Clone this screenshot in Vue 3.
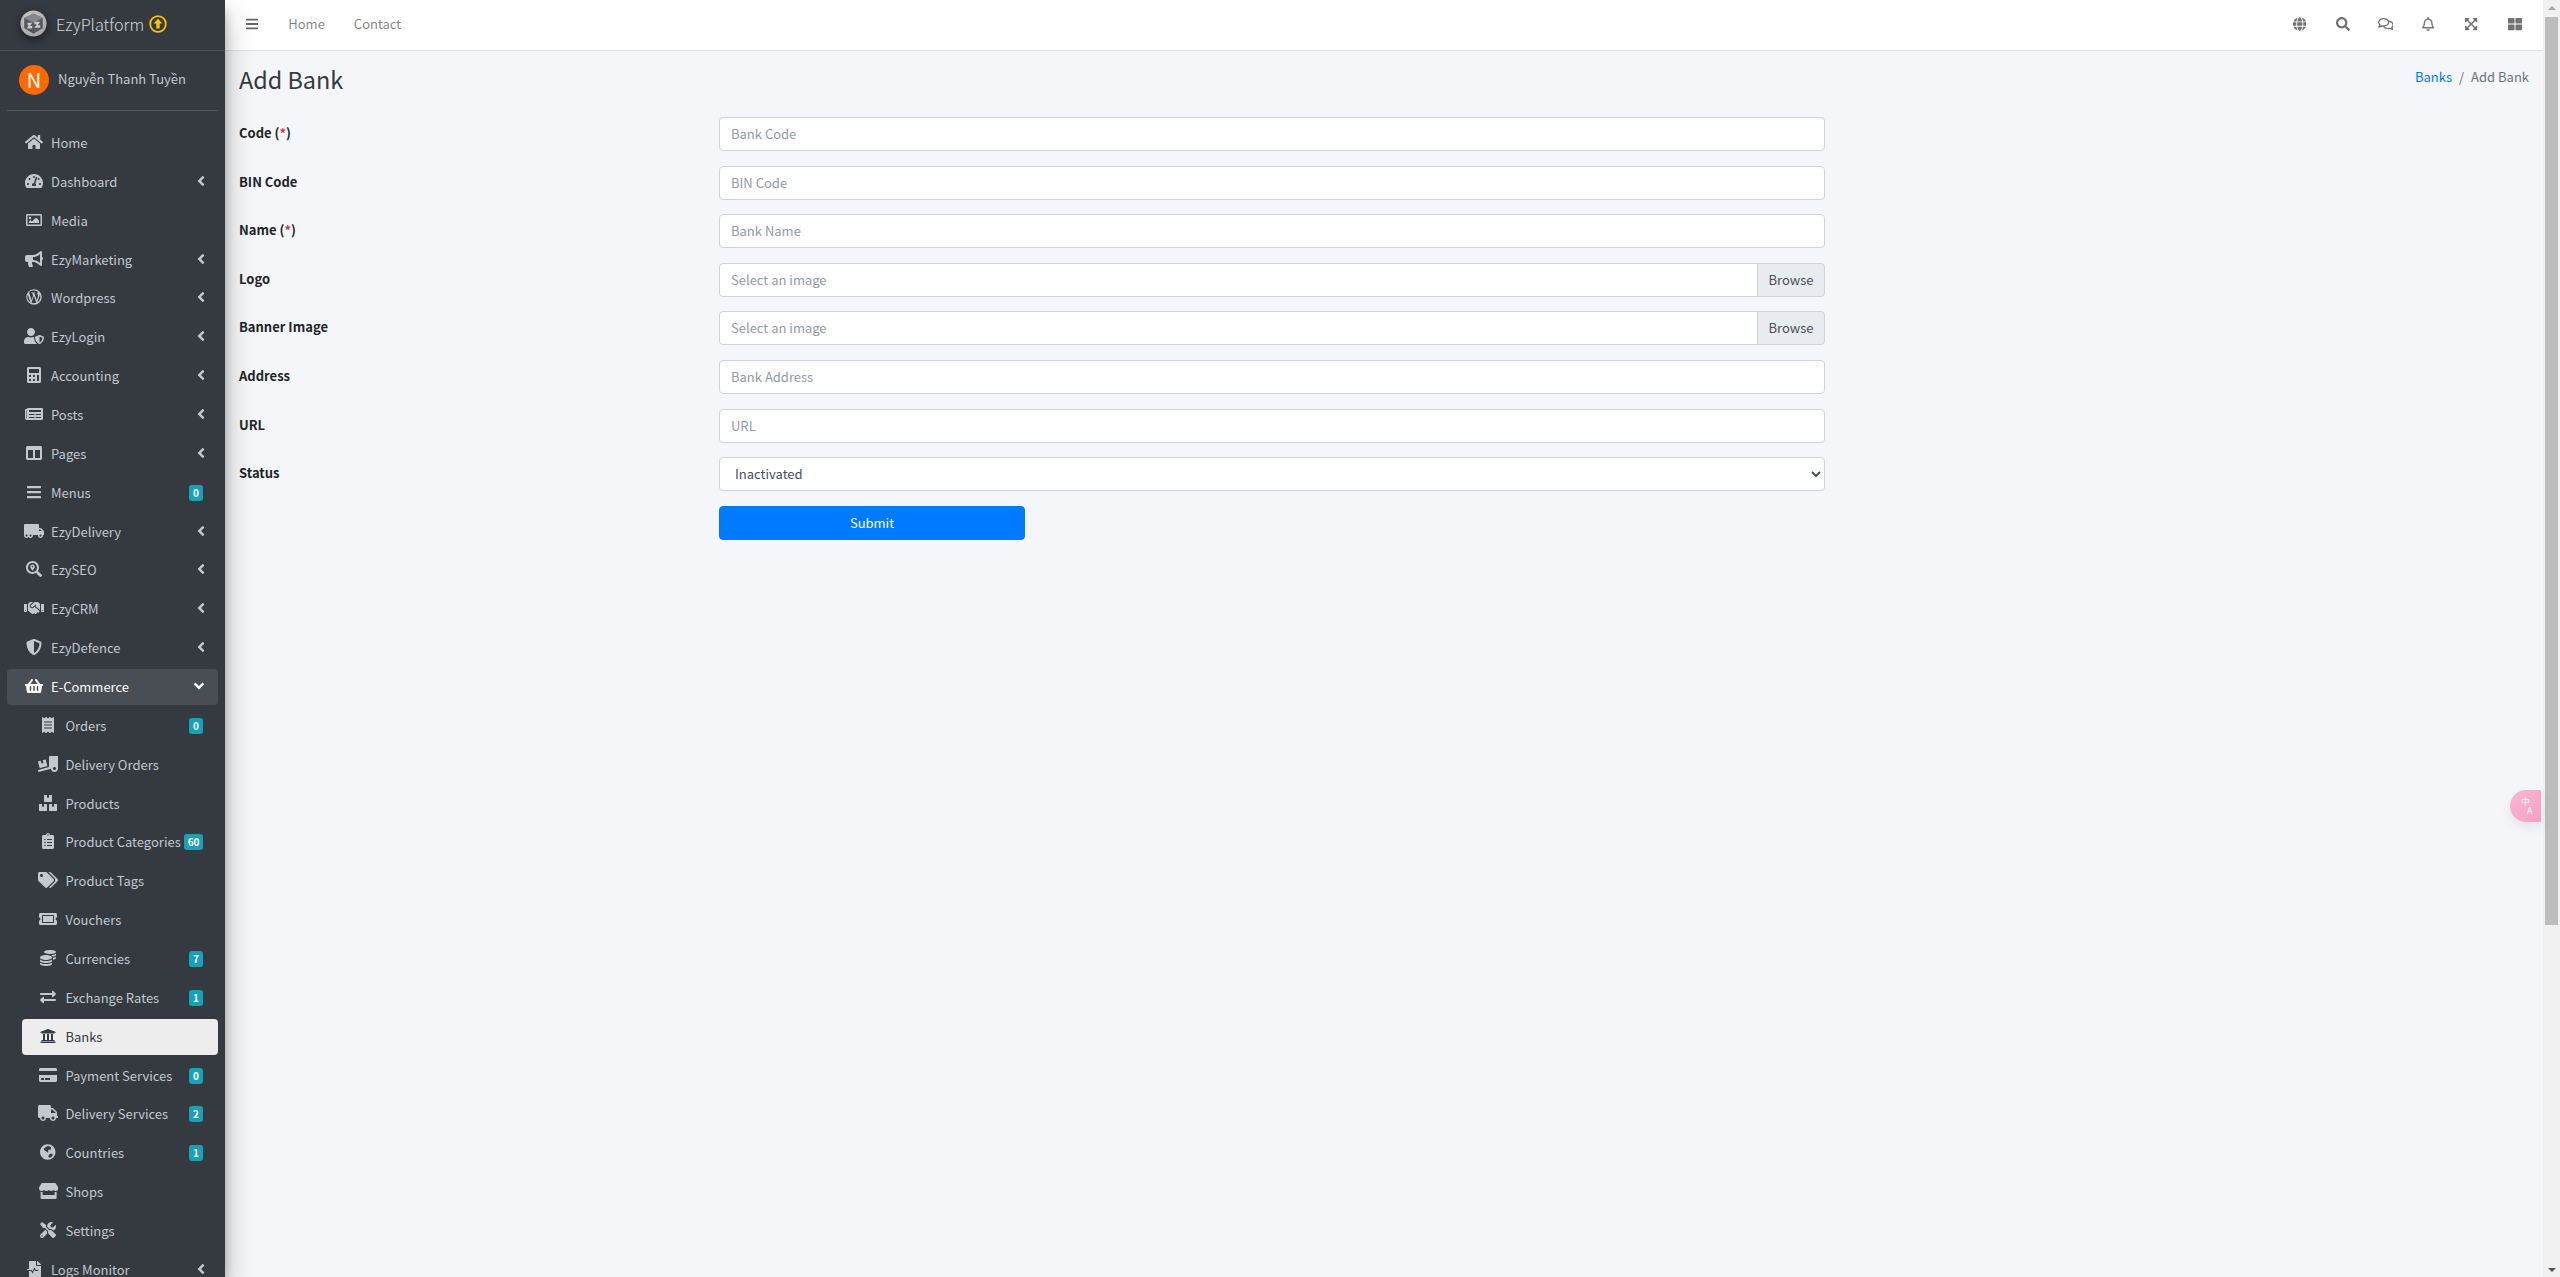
<script setup>
const P = {
  bars: [448, 'M16 132h416c8.837 0 16-7.163 16-16V76c0-8.837-7.163-16-16-16H16C7.163 60 0 67.163 0 76v40c0 8.837 7.163 16 16 16zm0 160h416c8.837 0 16-7.163 16-16v-40c0-8.837-7.163-16-16-16H16c-8.837 0-16 7.163-16 16v40c0 8.837 7.163 16 16 16zm0 160h416c8.837 0 16-7.163 16-16v-40c0-8.837-7.163-16-16-16H16c-8.837 0-16 7.163-16 16v40c0 8.837 7.163 16 16 16z'],
  search: [512, 'M505 442.7L405.3 343c-4.5-4.5-10.6-7-17-7H372c27.6-35.3 44-79.7 44-128C416 93.1 322.9 0 208 0S0 93.1 0 208s93.1 208 208 208c48.3 0 92.7-16.4 128-44v16.3c0 6.4 2.5 12.5 7 17l99.7 99.7c9.4 9.4 24.6 9.4 33.9 0l28.3-28.3c9.4-9.4 9.4-24.6.1-34zM208 336c-70.7 0-128-57.2-128-128 0-70.7 57.2-128 128-128 70.7 0 128 57.2 128 128 0 70.7-57.2 128-128 128z'],
  thLarge: [512, 'M296 32h192c13.255 0 24 10.745 24 24v160c0 13.255-10.745 24-24 24H296c-13.255 0-24-10.745-24-24V56c0-13.255 10.745-24 24-24zm-80 0H24C10.745 32 0 42.745 0 56v160c0 13.255 10.745 24 24 24h192c13.255 0 24-10.745 24-24V56c0-13.255-10.745-24-24-24zM0 296v160c0 13.255 10.745 24 24 24h192c13.255 0 24-10.745 24-24V296c0-13.255-10.745-24-24-24H24c-13.255 0-24 10.745-24 24zm296 184h192c13.255 0 24-10.745 24-24V296c0-13.255-10.745-24-24-24H296c-13.255 0-24 10.745-24 24v160c0 13.255 10.745 24 24 24z'],
  left: [256, 'M31.7 239l136-136c9.4-9.4 24.6-9.4 33.9 0l22.6 22.6c9.4 9.4 9.4 24.6 0 33.9L127.9 256l96.4 96.4c9.4 9.4 9.4 24.6 0 33.9L201.7 409c-9.4 9.4-24.6 9.4-33.9 0l-136-136c-9.5-9.4-9.5-24.6-.1-34z'],
  down: [320, 'M143 352.3L7 216.3c-9.4-9.4-9.4-24.6 0-33.9l22.6-22.6c9.4-9.4 24.6-9.4 33.9 0l96.4 96.4 96.4-96.4c9.4-9.4 24.6-9.4 33.9 0l22.6 22.6c9.4 9.4 9.4 24.6 0 33.9l-136 136c-9.2 9.4-24.4 9.4-33.8 0z'],
  home: [576, 'M280.37 148.26L96 300.11V464a16 16 0 0 0 16 16l112.06-.29a16 16 0 0 0 15.92-16V368a16 16 0 0 1 16-16h64a16 16 0 0 1 16 16v95.64a16 16 0 0 0 16 16.05L464 480a16 16 0 0 0 16-16V300L295.67 148.26a12.19 12.19 0 0 0-15.3 0zM571.6 251.47L488 182.56V44.05a12 12 0 0 0-12-12h-56a12 12 0 0 0-12 12v72.61L318.47 43a48 48 0 0 0-61 0L4.34 251.47a12 12 0 0 0-1.6 16.9l25.5 31A12 12 0 0 0 45.15 301l235.22-193.74a12.19 12.19 0 0 1 15.3 0L530.9 301a12 12 0 0 0 16.9-1.6l25.5-31a12 12 0 0 0-1.7-16.93z'],
  tach: [576, 'M288 32C128.94 32 0 160.94 0 320c0 52.8 14.25 102.26 39.06 144.8 5.61 9.62 16.3 15.2 27.44 15.2h443c11.14 0 21.83-5.58 27.44-15.2C561.75 422.26 576 372.8 576 320c0-159.06-128.94-288-288-288zm0 64c14.71 0 26.58 10.13 30.32 23.65-1.11 2.26-2.64 4.23-3.45 6.67l-9.22 27.67c-5.13 3.49-10.97 6.01-17.64 6.01-17.67 0-32-14.33-32-32S270.33 96 288 96zM96 384c-17.67 0-32-14.33-32-32s14.33-32 32-32 32 14.33 32 32-14.33 32-32 32zm48-160c-17.67 0-32-14.33-32-32s14.33-32 32-32 32 14.33 32 32-14.33 32-32 32zm246.77-72.41l-61.33 184C343.13 347.33 352 364.54 352 384c0 11.72-3.38 22.55-8.88 32H232.88c-5.5-9.45-8.88-20.28-8.88-32 0-33.94 26.5-61.43 59.9-63.59l61.34-184.01c4.17-12.56 17.73-19.45 30.36-15.17 12.57 4.19 19.35 17.79 15.17 30.36zm14.66 57.2l15.52-46.55c3.47-1.29 7.13-2.23 11.05-2.23 17.67 0 32 14.33 32 32s-14.33 32-32 32c-11.38-.01-20.89-6.28-26.57-15.22zM480 384c-17.67 0-32-14.33-32-32s14.33-32 32-32 32 14.33 32 32-14.33 32-32 32z'],
  image: [512, 'M464 64H48C21.49 64 0 85.49 0 112v288c0 26.51 21.49 48 48 48h416c26.51 0 48-21.49 48-48V112c0-26.51-21.49-48-48-48zm-6 336H54a6 6 0 0 1-6-6V118a6 6 0 0 1 6-6h404a6 6 0 0 1 6 6v276a6 6 0 0 1-6 6zM128 152c-22.091 0-40 17.909-40 40s17.909 40 40 40 40-17.909 40-40-17.909-40-40-40zM96 352h320v-80l-87.515-87.515c-4.686-4.686-12.284-4.686-16.971 0L192 304l-39.515-39.515c-4.686-4.686-12.284-4.686-16.971 0L96 304v48z'],
  bullhorn: [576, 'M576 240c0-23.63-12.95-44.04-32-55.12V32.01C544 23.26 537.02 0 512 0c-7.12 0-14.19 2.38-19.98 7.02l-85.03 68.03C364.28 109.19 310.66 128 256 128H64c-35.35 0-64 28.65-64 64v96c0 35.35 28.65 64 64 64h33.7c-1.39 10.48-2.18 21.14-2.18 32 0 39.77 9.26 77.35 25.56 110.94 5.19 10.69 16.52 17.06 28.4 17.06h74.28c26.05 0 41.69-29.84 25.9-50.56-16.4-21.52-26.15-48.36-26.15-77.44 0-11.11 1.62-21.79 4.41-32H256c54.66 0 108.28 18.81 150.98 52.95l85.03 68.03a32.023 32.023 0 0 0 19.98 7.02c24.92 0 32-22.78 32-32V295.13C563.05 284.04 576 263.63 576 240zm-96 141.42l-33.05-26.44C392.95 311.78 325.12 288 256 288v-96c69.12 0 136.95-23.78 190.95-66.98L480 98.58v282.84z'],
  wordpress: [512, 'M256 8a248 248 0 1 0 0 496 248 248 0 0 0 0-496zm0 40a208 208 0 0 1 141 55c-32-2-52 32-30 66 14 24 24 48 12 90l-34 104-78-232 24-4v-18H170v18l24 4 32 88-46 144-78-232 24-4v-18H76a208 208 0 0 1 180-61zM58 186l88 242A208 208 0 0 1 58 186zm118 256l76-222 78 214a208 208 0 0 1-154 8zm184-10l64-184c12-30 16-50 14-84a208 208 0 0 1-78 268z'],
  userShield: [640, 'M622.3 271.1l-115.2-45c-4.1-1.6-12.6-3.7-22.2 0l-115.2 45c-10.7 4.2-17.7 14-17.7 24.9 0 111.6 68.7 188.8 132.9 213.9 9.6 3.7 18 1.6 22.2 0C558.4 489.9 640 420.5 640 296c0-10.9-7-20.7-17.7-24.9zM496 462.4V273.3l95.5 37.3c-5.6 87.1-60.9 135.4-95.5 151.8zM224 256c70.7 0 128-57.3 128-128S294.7 0 224 0 96 57.3 96 128s57.3 128 128 128zm96 40c0-2.5.8-4.8 1.1-7.2-2.5-.1-4.9-.8-7.5-.8h-16.7c-22.2 10.2-46.9 16-72.9 16s-50.6-5.8-72.9-16h-16.7C60.2 288 0 348.2 0 422.4V464c0 26.5 21.5 48 48 48h352c6.8 0 13.3-1.5 19.2-4-54-42.9-99.2-116.7-99.2-212z'],
  calculator: [448, 'M400 0H48C22.4 0 0 22.4 0 48v416c0 25.6 22.4 48 48 48h352c25.6 0 48-22.4 48-48V48c0-25.6-22.4-48-48-48zM128 435c0 6.4-6.4 12.8-12.8 12.8H76.8c-6.4 0-12.8-6.4-12.8-12.8v-38.4c0-6.4 6.4-12.8 12.8-12.8h38.4c6.4 0 12.8 6.4 12.8 12.8V435zm0-128c0 6.4-6.4 12.8-12.8 12.8H76.8c-6.4 0-12.8-6.4-12.8-12.8v-38.4c0-6.4 6.4-12.8 12.8-12.8h38.4c6.4 0 12.8 6.4 12.8 12.8V307zm128 128c0 6.4-6.4 12.8-12.8 12.8h-38.4c-6.4 0-12.8-6.4-12.8-12.8v-38.4c0-6.4 6.4-12.8 12.8-12.8h38.4c6.4 0 12.8 6.4 12.8 12.8V435zm0-128c0 6.4-6.4 12.8-12.8 12.8h-38.4c-6.4 0-12.8-6.4-12.8-12.8v-38.4c0-6.4 6.4-12.8 12.8-12.8h38.4c6.4 0 12.8 6.4 12.8 12.8V307zm128 128c0 6.4-6.4 12.8-12.8 12.8h-38.4c-6.4 0-12.8-6.4-12.8-12.8V268.8c0-6.4 6.4-12.8 12.8-12.8h38.4c6.4 0 12.8 6.4 12.8 12.8V435zm0-256c0 6.4-6.4 12.8-12.8 12.8H76.8c-6.4 0-12.8-6.4-12.8-12.8V76.8C64 70.4 70.4 64 76.8 64h294.4c6.4 0 12.8 6.4 12.8 12.8V179z'],
  newspaper: [576, 'M552 64H88c-13.255 0-24 10.745-24 24v8H24c-13.255 0-24 10.745-24 24v272c0 30.928 25.072 56 56 56h472c26.51 0 48-21.49 48-48V88c0-13.255-10.745-24-24-24zM56 400a8 8 0 0 1-8-8V144h16v248a8 8 0 0 1-8 8zm236-16H140c-6.627 0-12-5.373-12-12v-8c0-6.627 5.373-12 12-12h152c6.627 0 12 5.373 12 12v8c0 6.627-5.373 12-12 12zm208 0H348c-6.627 0-12-5.373-12-12v-8c0-6.627 5.373-12 12-12h152c6.627 0 12 5.373 12 12v8c0 6.627-5.373 12-12 12zm-208-96H140c-6.627 0-12-5.373-12-12v-8c0-6.627 5.373-12 12-12h152c6.627 0 12 5.373 12 12v8c0 6.627-5.373 12-12 12zm208 0H348c-6.627 0-12-5.373-12-12v-8c0-6.627 5.373-12 12-12h152c6.627 0 12 5.373 12 12v8c0 6.627-5.373 12-12 12zm0-96H140c-6.627 0-12-5.373-12-12v-40c0-6.627 5.373-12 12-12h360c6.627 0 12 5.373 12 12v40c0 6.627-5.373 12-12 12z'],
  columns: [512, 'M464 32H48C21.49 32 0 53.49 0 80v352c0 26.51 21.49 48 48 48h416c26.51 0 48-21.49 48-48V80c0-26.51-21.49-48-48-48zM224 416H64V160h160v256zm224 0H288V160h160v256z'],
  truck: [640, 'M624 352h-16V243.9c0-12.7-5.1-24.9-14.1-33.9L494 110.1c-9-9-21.2-14.1-33.9-14.1H416V48c0-26.5-21.5-48-48-48H48C21.5 0 0 21.5 0 48v320c0 26.5 21.5 48 48 48h16c0 53 43 96 96 96s96-43 96-96h128c0 53 43 96 96 96s96-43 96-96h48c8.8 0 16-7.2 16-16v-32c0-8.8-7.2-16-16-16zM160 464c-26.5 0-48-21.5-48-48s21.5-48 48-48 48 21.5 48 48-21.5 48-48 48zm320 0c-26.5 0-48-21.5-48-48s21.5-48 48-48 48 21.5 48 48-21.5 48-48 48zm80-208H416V144h44.1l99.9 99.9V256z'],
  truckMoving: [640, 'M621.3 237.3l-58.5-58.5c-12-12-28.3-18.7-45.3-18.7H480V64c0-17.7-14.3-32-32-32H32C14.3 32 0 46.3 0 64v336c0 44.2 35.8 80 80 80 26.3 0 49.4-12.9 64-32.4 14.6 19.6 37.7 32.4 64 32.4 44.2 0 80-35.8 80-80 0-5.5-.6-10.8-1.6-16h163.2c-1.1 5.2-1.6 10.5-1.6 16 0 44.2 35.8 80 80 80s80-35.8 80-80c0-5.5-.6-10.8-1.6-16H624c8.8 0 16-7.2 16-16v-85.5c0-17-6.7-33.2-18.7-45.2zM80 432c-17.6 0-32-14.4-32-32s14.4-32 32-32 32 14.4 32 32-14.4 32-32 32zm128 0c-17.6 0-32-14.4-32-32s14.4-32 32-32 32 14.4 32 32-14.4 32-32 32zm272-224h37.5c4.3 0 8.3 1.7 11.3 4.7l43.3 43.3H480v-48zm48 224c-17.6 0-32-14.4-32-32s14.4-32 32-32 32 14.4 32 32-14.4 32-32 32z'],
  searchLoc: [512, 'M505.04 442.66l-99.71-99.69c-4.5-4.5-10.6-7-17-7h-16.3c27.6-35.3 44-79.69 44-127.99C416.03 93.09 322.92 0 208.02 0S0 93.09 0 207.98s93.11 207.98 208.02 207.98c48.3 0 92.71-16.4 128.01-44v16.3c0 6.4 2.5 12.5 7 17l99.71 99.69c9.4 9.4 24.6 9.4 33.9 0l28.3-28.3c9.4-9.4 9.4-24.59.1-33.99zm-297.02-90.7c-79.54 0-144-64.34-144-143.98 0-79.53 64.35-143.98 144-143.98 79.54 0 144 64.34 144 143.98 0 79.53-64.35 143.98-144 143.98zm.02-239.96c-40.78 0-73.84 33.05-73.84 73.83 0 32.96 48.26 93.05 66.75 114.86a9.24 9.24 0 0 0 14.18 0c18.49-21.81 66.75-81.9 66.75-114.86 0-40.78-33.06-73.83-73.84-73.83zm0 96c-13.25 0-24-10.75-24-24 0-13.26 10.75-24 24-24s24 10.74 24 24c0 13.25-10.75 24-24 24z'],
  handshake: [640, 'M434.7 64h-85.9c-8 0-15.7 3-21.6 8.4l-98.3 90c-.1.1-.2.3-.3.4-16.6 15.6-16.3 40.5-2.1 56 12.7 13.9 39.4 17.6 56.1 2.7.1-.1.3-.1.4-.2l79.9-73.2c6.5-5.9 16.7-5.5 22.6 1 6 6.5 5.5 16.6-1 22.6l-26.1 23.9L504 313.8c2.9 2.4 5.5 5 7.9 7.7V128l-54.6-54.6c-5.9-6-14.1-9.4-22.6-9.4zM544 128.2v223.9c0 17.7 14.3 32 32 32h64V128.2h-96zm48 223.9c-8.8 0-16-7.2-16-16s7.2-16 16-16 16 7.2 16 16-7.2 16-16 16zM0 384h64c17.7 0 32-14.3 32-32V128.2H0V384zm48-63.9c8.8 0 16 7.2 16 16s-7.2 16-16 16-16-7.2-16-16c0-8.9 7.2-16 16-16zm435.9 18.6L334.6 217.5l-30 27.5c-29.7 27.1-75.2 24.5-101.7-4.4-26.9-29.4-24.8-74.9 4.4-101.7L289.1 64h-83.8c-8.5 0-16.6 3.4-22.6 9.4L128 128v223.9h18.3l90.5 81.9c27.4 22.3 67.7 18.1 90-9.3l.2-.2 17.9 15.5c15.9 13 39.4 10.5 52.3-5.4l31.4-38.6 5.4 4.4c13.7 11.1 33.9 9.1 45-4.7l9.5-11.7c11.2-13.8 9.1-33.9-4.6-45.1z'],
  shield: [512, 'M466.5 83.7l-192-80a48.15 48.15 0 0 0-36.9 0l-192 80C27.7 91.1 16 108.6 16 128c0 198.5 114.5 335.7 221.5 380.3 11.8 4.9 25.1 4.9 36.9 0C360.1 472.6 496 349.3 496 128c0-19.4-11.7-36.9-29.5-44.3zM256.1 446.3l-.1-381 175.9 73.3c-3.3 151.4-82.1 261.1-175.8 307.7z'],
  basket: [576, 'M576 216v16c0 13.255-10.745 24-24 24h-8l-26.113 182.788C514.509 462.435 494.257 480 470.37 480H105.63c-23.887 0-44.139-17.565-47.518-41.212L32 256h-8c-13.255 0-24-10.745-24-24v-16c0-13.255 10.745-24 24-24h67.341l106.78-146.821c10.395-14.292 30.407-17.453 44.701-7.058 14.293 10.395 17.453 30.408 7.058 44.701L170.477 192h235.046L326.12 82.821c-10.395-14.292-7.234-34.306 7.059-44.701 14.291-10.395 34.306-7.235 44.701 7.058L484.659 192H552c13.255 0 24 10.745 24 24zM312 392V280c0-13.255-10.745-24-24-24s-24 10.745-24 24v112c0 13.255 10.745 24 24 24s24-10.745 24-24zm112 0V280c0-13.255-10.745-24-24-24s-24 10.745-24 24v112c0 13.255 10.745 24 24 24s24-10.745 24-24zm-224 0V280c0-13.255-10.745-24-24-24s-24 10.745-24 24v112c0 13.255 10.745 24 24 24s24-10.745 24-24z'],
  receipt: [384, 'M358.4 3.2L320 48 265.6 3.2a15.9 15.9 0 0 0-19.2 0L192 48 137.6 3.2a15.9 15.9 0 0 0-19.2 0L64 48 25.6 3.2C15-4.7 0 2.8 0 16v480c0 13.2 15 20.7 25.6 12.8L64 464l54.4 44.8a15.9 15.9 0 0 0 19.2 0L192 464l54.4 44.8a15.9 15.9 0 0 0 19.2 0L320 464l38.4 44.8c10.5 7.9 25.6.4 25.6-12.8V16c0-13.2-15-20.7-25.6-12.8zM320 360c0 4.4-3.6 8-8 8H72c-4.4 0-8-3.6-8-8v-16c0-4.4 3.6-8 8-8h240c4.4 0 8 3.6 8 8v16zm0-96c0 4.4-3.6 8-8 8H72c-4.4 0-8-3.6-8-8v-16c0-4.4 3.6-8 8-8h240c4.4 0 8 3.6 8 8v16zm0-96c0 4.4-3.6 8-8 8H72c-4.4 0-8-3.6-8-8v-16c0-4.4 3.6-8 8-8h240c4.4 0 8 3.6 8 8v16z'],
  truckLoading: [640, 'M50.2 375.6c2.3 8.5 11.1 13.6 19.6 11.3l216.4-58c8.5-2.3 13.6-11.1 11.3-19.6l-49.7-185.5c-2.3-8.5-11.1-13.6-19.6-11.3L151 133.3l24.8 92.7-61.8 16.5-24.8-92.7-77.3 20.7C3.4 172.8-1.7 181.6.6 190.1l49.6 185.5zM384 0c-17.7 0-32 14.3-32 32v323.6L5.9 450c-4.3 1.2-6.8 5.6-5.6 9.8l12.6 46.3c1.2 4.3 5.6 6.8 9.8 5.6l393.7-107.4C418.8 464.1 467.6 512 528 512c61.9 0 112-50.1 112-112V0H384zm144 448c-26.5 0-48-21.5-48-48s21.5-48 48-48 48 21.5 48 48-21.5 48-48 48z'],
  boxes: [576, 'M560 288h-80v96l-32-21.3-32 21.3v-96h-80c-8.8 0-16 7.2-16 16v192c0 8.8 7.2 16 16 16h224c8.8 0 16-7.2 16-16V304c0-8.8-7.2-16-16-16zm-384-64h224c8.8 0 16-7.2 16-16V16c0-8.8-7.2-16-16-16h-80v96l-32-21.3L256 96V0h-80c-8.8 0-16 7.2-16 16v192c0 8.8 7.2 16 16 16zm64 64h-80v96l-32-21.3L96 384v-96H16c-8.8 0-16 7.2-16 16v192c0 8.8 7.2 16 16 16h224c8.8 0 16-7.2 16-16V304c0-8.8-7.2-16-16-16z'],
  clipboard: [384, 'M336 64h-80c0-35.3-28.7-64-64-64s-64 28.7-64 64H48C21.5 64 0 85.5 0 112v352c0 26.5 21.5 48 48 48h288c26.5 0 48-21.5 48-48V112c0-26.5-21.5-48-48-48zM96 424c-13.3 0-24-10.7-24-24s10.7-24 24-24 24 10.7 24 24-10.7 24-24 24zm0-96c-13.3 0-24-10.7-24-24s10.7-24 24-24 24 10.7 24 24-10.7 24-24 24zm0-96c-13.3 0-24-10.7-24-24s10.7-24 24-24 24 10.7 24 24-10.7 24-24 24zm96-192c13.3 0 24 10.7 24 24s-10.7 24-24 24-24-10.7-24-24 10.7-24 24-24zm128 368c0 4.4-3.6 8-8 8H168c-4.4 0-8-3.6-8-8v-16c0-4.4 3.6-8 8-8h144c4.4 0 8 3.6 8 8v16zm0-96c0 4.4-3.6 8-8 8H168c-4.4 0-8-3.6-8-8v-16c0-4.4 3.6-8 8-8h144c4.4 0 8 3.6 8 8v16zm0-96c0 4.4-3.6 8-8 8H168c-4.4 0-8-3.6-8-8v-16c0-4.4 3.6-8 8-8h144c4.4 0 8 3.6 8 8v16z'],
  tags: [640, 'M497.941 225.941L286.059 14.059A48 48 0 0 0 252.118 0H48C21.49 0 0 21.49 0 48v204.118a48 48 0 0 0 14.059 33.941l211.882 211.882c18.744 18.745 49.136 18.746 67.882 0l204.118-204.118c18.745-18.745 18.745-49.137 0-67.882zM112 160c-26.51 0-48-21.49-48-48s21.49-48 48-48 48 21.49 48 48-21.49 48-48 48zm513.941 133.823L421.823 497.941c-18.745 18.745-49.137 18.745-67.882 0l-.36-.36L527.64 323.522c16.999-16.999 26.36-39.6 26.36-63.64s-9.362-46.641-26.36-63.64L331.397 0h48.721a48 48 0 0 1 33.941 14.059l211.882 211.882c18.745 18.745 18.745 49.137 0 67.882z'],
  ticket: [576, 'M128 160h320v192H128V160zm400 96c0 26.51 21.49 48 48 48v96c0 26.51-21.49 48-48 48H48c-26.51 0-48-21.49-48-48v-96c26.51 0 48-21.49 48-48s-21.49-48-48-48v-96c0-26.51 21.49-48 48-48h480c26.51 0 48 21.49 48 48v96c-26.51 0-48 21.49-48 48zm-48-104c0-13.255-10.745-24-24-24H120c-13.255 0-24 10.745-24 24v208c0 13.255 10.745 24 24 24h336c13.255 0 24-10.745 24-24V152z'],
  coins: [512, 'M0 405.3V448c0 35.3 86 64 192 64s192-28.7 192-64v-42.7C342.7 434.4 267.2 448 192 448S41.3 434.4 0 405.3zM320 128c106 0 192-28.7 192-64S426 0 320 0 128 28.7 128 64s86 64 192 64zM0 300.4V352c0 35.3 86 64 192 64s192-28.7 192-64v-51.6c-41.3 34-116.9 51.6-192 51.6S41.3 334.4 0 300.4zm416 11c57.3-11.1 96-31.7 96-55.4v-42.7c-23.2 16.4-57.3 27.6-96 34.5v63.6zM192 160C86 160 0 195.8 0 240s86 80 192 80 192-35.8 192-80-86-80-192-80zm219.3 56.3c60-10.8 100.7-32 100.7-56.3v-42.7c-35.5 25.1-96.5 38.6-160.7 41.8 29.5 14.3 51.2 33.5 60 57.2z'],
  exchange: [512, 'M0 168v-16c0-13.255 10.745-24 24-24h360V80c0-21.367 25.899-32.042 40.971-16.971l80 80c9.372 9.373 9.372 24.569 0 33.941l-80 80C409.956 271.982 384 261.456 384 240v-48H24c-13.255 0-24-10.745-24-24zm488 152H128v-48c0-21.314-25.862-32.08-40.971-16.971l-80 80c-9.372 9.373-9.372 24.569 0 33.941l80 80C102.057 464.998 128 454.437 128 432v-48h360c13.255 0 24-10.745 24-24v-16c0-13.255-10.745-24-24-24z'],
  university: [512, 'M496 128v16a8 8 0 0 1-8 8h-24v12c0 6.627-5.373 12-12 12H60c-6.627 0-12-5.373-12-12v-12H24a8 8 0 0 1-8-8v-16a8 8 0 0 1 4.941-7.392l232-88a7.996 7.996 0 0 1 6.118 0l232 88A8 8 0 0 1 496 128zm-24 304H40c-13.255 0-24 10.745-24 24v16a8 8 0 0 0 8 8h464a8 8 0 0 0 8-8v-16c0-13.255-10.745-24-24-24zM96 192v192H60c-6.627 0-12 5.373-12 12v20h416v-20c0-6.627-5.373-12-12-12h-36V192h-64v192h-64V192h-64v192h-64V192H96z'],
  card: [576, 'M0 432c0 26.5 21.5 48 48 48h480c26.5 0 48-21.5 48-48V256H0v176zm192-68c0-6.6 5.4-12 12-12h136c6.6 0 12 5.4 12 12v40c0 6.6-5.4 12-12 12H204c-6.6 0-12-5.4-12-12v-40zm-128 0c0-6.6 5.4-12 12-12h72c6.6 0 12 5.4 12 12v40c0 6.6-5.4 12-12 12H76c-6.6 0-12-5.4-12-12v-40zM576 80v48H0V80c0-26.5 21.5-48 48-48h480c26.5 0 48 21.5 48 48z'],
  globeAsia: [496, 'M248 8C111 8 0 119 0 256s111 248 248 248 248-111 248-248S385 8 248 8zm-60 88l64-30 70 12 38 50-26 60-50-14-30 44 20 46-46 10-34-52-44-10-34-60zm150 210l48 8 22 34-34 56-58 32-46-24 12-62z'],
  store: [616, 'M602 118.6L537.1 15C531.3 5.7 521 0 510 0H106C95 0 84.7 5.7 78.9 15L14 118.6c-33.9 54.1-3.9 129.3 59.4 137.9 4.6.6 9.2.9 13.7.9 29.9 0 56.4-13.1 74.8-33.4 18.4 20.3 45 33.4 74.8 33.4 29.9 0 56.4-13.1 74.8-33.4 18.4 20.3 45 33.4 74.8 33.4 29.9 0 56.4-13.1 74.8-33.4 18.5 20.3 45 33.4 74.8 33.4 4.6 0 9.1-.3 13.7-.9 63.5-8.5 93.6-83.7 59.6-137.9zM529.5 288c-10 0-19.9-1.5-29.5-3.8V384H116v-99.8c-9.6 2.2-19.5 3.8-29.5 3.8-6 0-12.1-.4-18-1.2-5.6-.8-11.1-2.1-16.4-3.6V480c0 17.7 14.3 32 32 32h448c17.7 0 32-14.3 32-32V283.2c-5.4 1.6-10.8 2.9-16.4 3.6-6.1.8-12.1 1.2-18.2 1.2z'],
  tools: [512, 'M501.1 395.7L384 278.6c-23.1-23.1-57.6-27.6-85.4-13.9L192 158.1V96L64 0 0 64l96 128h62.1l106.6 106.6c-13.6 27.8-9.2 62.3 13.9 85.4l117.1 117.1c14.6 14.6 38.2 14.6 52.7 0l52.7-52.7c14.5-14.6 14.5-38.2 0-52.7zM331.7 225c28.3 0 54.9 11 74.9 31l19.4 19.4c15.8-6.9 30.8-16.5 43.8-29.5 37.1-37.1 49.7-89.3 37.9-136.7-2.2-9-13.5-12.1-20.1-5.5l-74.4 74.4-67.9-11.3L334 98.9l74.4-74.4c6.6-6.6 3.4-17.9-5.7-20.2-47.4-11.7-99.6.9-136.6 37.9-28.5 28.5-41.9 66.1-41.2 103.6l82.1 82.1c8.1-1.9 16.5-2.9 24.7-2.9zm-103.9 82l-56.7-56.7L18.7 402.8c-25 25-25 65.5 0 90.5s65.5 25 90.5 0l123.6-123.6c-7.6-19.9-9.9-41.6-5-62.7zM64 472c-13.2 0-24-10.8-24-24 0-13.3 10.7-24 24-24s24 10.7 24 24c0 13.2-10.7 24-24 24z'],
  fileMed: [448, 'M288 136V0H88C74.7 0 64 10.7 64 24v232H8c-4.4 0-8 3.6-8 8v16c0 4.4 3.6 8 8 8h140.9c3 0 5.8 1.7 7.2 4.4l19.9 39.8 56.8-113.7c2.9-5.9 11.4-5.9 14.3 0l34.7 69.5H352c8.8 0 16 7.2 16 16s-7.2 16-16 16h-89.9L240 275.8l-56.8 113.7c-2.9 5.9-11.4 5.9-14.3 0L134.1 320H64v168c0 13.3 10.7 24 24 24h336c13.3 0 24-10.7 24-24V160H312c-13.2 0-24-10.8-24-24zm153-31L343.1 7c-4.5-4.5-10.6-7-17-7H320v128h128v-6.1c0-6.3-2.5-12.4-7-16.9z'],
  globe: [496, 'M336.5 160C322 70.7 287.8 8 248 8s-74 62.7-88.5 152h177zM152 256c0 22.2 1.2 43.5 3.3 64h185.3c2.1-20.5 3.3-41.8 3.3-64s-1.2-43.5-3.3-64H155.3c-2.1 20.5-3.3 41.8-3.3 64zm324.7-96c-28.6-67.9-86.5-120.4-158-141.6 24.4 33.8 41.2 84.7 50 141.6h108zM177.2 18.4C105.8 39.6 47.8 92.1 19.3 160h108c8.7-56.9 25.5-107.8 49.9-141.6zM487.4 192H372.7c2.1 21 3.3 42.5 3.3 64s-1.2 43-3.3 64h114.6c5.5-20.5 8.6-41.8 8.6-64s-3.1-43.5-8.5-64zM120 256c0-21.5 1.2-43 3.3-64H8.6C3.2 212.5 0 233.8 0 256s3.2 43.5 8.6 64h114.6c-2-21-3.2-42.5-3.2-64zm39.5 96c14.5 89.3 48.7 152 88.5 152s74-62.7 88.5-152h-177zm159.3 141.6c71.4-21.2 129.4-73.7 158-141.6h-108c-8.8 56.9-25.6 107.8-50 141.6zM19.3 352c28.6 67.9 86.5 120.4 158 141.6-24.4-33.8-41.2-84.7-50-141.6h-108z'],
  comments: [576, 'M532 386.2c27.5-27.1 44-61.1 44-98.2 0-80-76.5-146.1-176.2-157.9C368.3 72.5 294.3 32 208 32 93.1 32 0 103.6 0 192c0 37 16.5 71 44 98.2-15.3 30.7-37.3 54.5-37.7 54.9-6.3 6.7-8.1 16.5-4.4 25 3.6 8.5 12 14 21.2 14 53.5 0 96.7-20.2 125.2-38.8 9.2 2.1 18.7 3.7 28.4 4.9C208.1 407.6 281.8 448 368 448c20.8 0 40.8-2.4 59.8-6.8C456.3 459.7 499.4 480 553 480c9.2 0 17.5-5.5 21.2-14 3.6-8.5 1.9-18.3-4.4-25-.4-.3-22.5-24.1-37.8-54.8zm-392.8-92.3L122.1 305c-14.1 9.1-28.5 16.3-43.1 21.4 2.7-4.7 5.4-9.7 8-14.8l15.5-31.1L77.7 256C64.2 242.6 48 220.7 48 192c0-60.7 73.3-112 160-112s160 51.3 160 112-73.3 112-160 112c-16.5 0-33-1.9-49-5.6l-19.8-4.5zM498.3 352l-24.7 24.4 15.5 31.1c2.6 5.1 5.3 10.1 8 14.8-14.6-5.1-29-12.3-43.1-21.4l-17.1-11.1-19.9 4.6c-16 3.7-32.5 5.6-49 5.6-54 0-102.2-20.1-131.3-49.7C338 339.5 416 272.9 416 192c0-3.4-.4-6.7-.7-10C479.7 196.5 528 238.8 528 288c0 28.7-16.2 50.6-29.7 64z'],
  bell: [448, 'M439.39 362.29c-19.32-20.76-55.47-51.99-55.47-154.29 0-77.7-54.48-139.9-127.94-155.16V32c0-17.67-14.32-32-31.98-32s-31.98 14.33-31.98 32v20.84C118.56 68.1 64.08 130.3 64.08 208c0 102.3-36.15 133.53-55.47 154.29-6 6.45-8.66 14.16-8.61 21.71.11 16.4 12.98 32 32.1 32h383.8c19.12 0 32-15.6 32.1-32 .05-7.55-2.61-15.27-8.61-21.71zM67.53 368c21.22-27.97 44.42-74.33 44.53-159.42 0-.2-.06-.38-.06-.58 0-61.86 50.14-112 112-112s112 50.14 112 112c0 .2-.06.38-.06.58.11 85.1 23.31 131.46 44.53 159.42H67.53zM224 512c35.32 0 63.97-28.65 63.97-64H160.03c0 35.35 28.65 64 63.97 64z'],
  expand: [448, 'M448 344v112a23.94 23.94 0 0 1-24 24H312c-21.39 0-32.09-25.9-17-41l36.2-36.2L224 295.6 116.77 402.9 153 439c15.09 15.1 4.39 41-17 41H24a23.94 23.94 0 0 1-24-24V344c0-21.4 25.89-32.1 41-17l36.19 36.2L184.46 256 77.18 148.7 41 185c-15.1 15.1-41 4.4-41-17V56a23.94 23.94 0 0 1 24-24h112c21.39 0 32.09 25.9 17 41l-36.2 36.2L224 216.4l107.23-107.3L295 73c-15.09-15.1-4.39-41 17-41h112a23.94 23.94 0 0 1 24 24v112c0 21.4-25.89 32.1-41 17l-36.19-36.2L263.54 256l107.28 107.3L407 327.1c15.1-15.2 41-4.5 41 16.9z'],
}

const menu = [
  { label: 'Home', icon: 'home' },
  { label: 'Dashboard', icon: 'tach', arrow: true },
  { label: 'Media', icon: 'image' },
  { label: 'EzyMarketing', icon: 'bullhorn', arrow: true },
  { label: 'Wordpress', icon: 'wordpress', arrow: true },
  { label: 'EzyLogin', icon: 'userShield', arrow: true },
  { label: 'Accounting', icon: 'calculator', arrow: true },
  { label: 'Posts', icon: 'newspaper', arrow: true },
  { label: 'Pages', icon: 'columns', arrow: true },
  { label: 'Menus', icon: 'bars', badge: '0' },
  { label: 'EzyDelivery', icon: 'truckMoving', arrow: true },
  { label: 'EzySEO', icon: 'searchLoc', arrow: true },
  { label: 'EzyCRM', icon: 'handshake', arrow: true },
  { label: 'EzyDefence', icon: 'shield', arrow: true },
  { label: 'E-Commerce', icon: 'basket', open: true },
  { label: 'Orders', icon: 'receipt', sub: true, badge: '0' },
  { label: 'Delivery Orders', icon: 'truckLoading', sub: true },
  { label: 'Products', icon: 'boxes', sub: true },
  { label: 'Product Categories', icon: 'clipboard', sub: true, badge: '60' },
  { label: 'Product Tags', icon: 'tags', sub: true },
  { label: 'Vouchers', icon: 'ticket', sub: true },
  { label: 'Currencies', icon: 'coins', sub: true, badge: '7' },
  { label: 'Exchange Rates', icon: 'exchange', sub: true, badge: '1' },
  { label: 'Banks', icon: 'university', sub: true, active: true },
  { label: 'Payment Services', icon: 'card', sub: true, badge: '0' },
  { label: 'Delivery Services', icon: 'truck', sub: true, badge: '2' },
  { label: 'Countries', icon: 'globeAsia', sub: true, badge: '1' },
  { label: 'Shops', icon: 'store', sub: true },
  { label: 'Settings', icon: 'tools', sub: true },
  { label: 'Logs Monitor', icon: 'fileMed', arrow: true },
]

const topIcons = ['globe', 'search', 'comments', 'bell', 'expand', 'thLarge']

const fields = [
  { label: 'Code', req: true, ph: 'Bank Code', type: 'text' },
  { label: 'BIN Code', ph: 'BIN Code', type: 'text' },
  { label: 'Name', req: true, ph: 'Bank Name', type: 'text' },
  { label: 'Logo', ph: 'Select an image', type: 'file' },
  { label: 'Banner Image', ph: 'Select an image', type: 'file' },
  { label: 'Address', ph: 'Bank Address', type: 'text' },
  { label: 'URL', ph: 'URL', type: 'text' },
]
const vb = (k) => `0 0 ${P[k][0]} 512`
</script>

<template>
  <div class="page">
    <aside class="sidebar">
      <div class="brand">
        <svg class="logo" viewBox="0 0 32 32">
          <defs>
            <radialGradient id="lg" cx="0.45" cy="0.4" r="0.65">
              <stop offset="0" stop-color="#dcdcdc" />
              <stop offset="1" stop-color="#a0a0a0" />
            </radialGradient>
          </defs>
          <circle cx="16" cy="16" r="15.5" fill="url(#lg)" />
          <path d="M16 4l11 5.5v12L16 28 5 21.5v-12z" fill="#55585c" />
          <path d="M16 4l11 5.5-11 5.5-11-5.5z" fill="#85888c" />
          <path d="M9 15h5.5l-2.5 4h2.500v3H8l2.500-4H9zM17 14h7l-3 4h3v3h-7l3-4h-3z" fill="#c8c9cb" />
        </svg>
        <span class="brand-text">EzyPlatform</span>
        <svg class="upgrade" viewBox="0 0 18 18">
          <circle cx="9" cy="9" r="7.8" fill="none" stroke="#ffc107" stroke-width="1.8" />
          <path d="M9 3.8l4.4 4.8h-2.700V13.500H7.300V8.600H4.600z" fill="#ffc107" />
        </svg>
      </div>
      <div class="user">
        <div class="avatar">N</div>
        <span class="user-name">Nguyễn Thanh Tuyền</span>
      </div>
      <nav class="nav">
        <a
          v-for="m in menu"
          :key="m.label"
          class="link"
          :class="{ sub: m.sub, open: m.open, active: m.active }"
        >
          <span class="ico-box">
            <svg class="ico" :viewBox="vb(m.icon)"><path :d="P[m.icon][1]" /></svg>
          </span>
          <span class="label">{{ m.label }}</span>
          <span v-if="m.badge" class="badge">{{ m.badge }}</span>
          <svg v-if="m.arrow" class="ico chev" :viewBox="vb('left')"><path :d="P.left[1]" /></svg>
          <svg v-if="m.open" class="ico chev-down" :viewBox="vb('down')"><path :d="P.down[1]" /></svg>
        </a>
      </nav>
    </aside>

    <div class="main">
      <header class="topbar">
        <svg class="ico burger" :viewBox="vb('bars')"><path :d="P.bars[1]" /></svg>
        <a class="top-link">Home</a>
        <a class="top-link">Contact</a>
        <div class="top-right">
          <span v-for="t in topIcons" :key="t" class="top-ico">
            <svg class="ico" :viewBox="vb(t)"><path :d="P[t][1]" /></svg>
          </span>
        </div>
      </header>

      <main class="content">
        <div class="head">
          <h1>Add Bank</h1>
          <div class="crumb">
            <a>Banks</a><span class="sep">/</span><span>Add Bank</span>
          </div>
        </div>
        <form class="form">
          <div v-for="f in fields" :key="f.label" class="row">
            <label class="lbl">{{ f.label }}<template v-if="f.req"> (<span class="req">*</span>)</template></label>
            <div class="ctl">
              <input class="input" type="text" :placeholder="f.ph" />
              <span v-if="f.type === 'file'" class="addon">Browse</span>
            </div>
          </div>
          <div class="row">
            <label class="lbl">Status</label>
            <div class="ctl">
              <select class="input select">
                <option>Inactivated</option>
                <option>Activated</option>
              </select>
            </div>
          </div>
          <div class="row">
            <div class="lbl"></div>
            <button type="button" class="submit">Submit</button>
          </div>
        </form>
        <div class="float-btn"><span>中</span><span class="float-a">A</span></div>
      </main>
    </div>

    <div class="scrollbar">
      <div class="arrow up"></div>
      <div class="thumb"></div>
      <div class="track-fill"></div>
      <div class="arrow dn"></div>
    </div>
  </div>
</template>

<style scoped>
.page {
  display: flex;
  height: 1277px;
  overflow: hidden;
  background: #f4f6f9;
  font-family: "Noto Sans CJK SC", "Noto Sans", sans-serif;
  font-size: 13px;
  color: #212529;
}
.ico { height: 16px; width: auto; display: block; fill: currentColor; }

.sidebar {
  width: 225px;
  flex: none;
  height: 1277px;
  overflow: hidden;
  background: #343a40;
  color: #c2c7d0;
  box-shadow: 0 14px 28px rgba(0,0,0,.25), 0 10px 10px rgba(0,0,0,.22);
  position: relative;
  z-index: 2;
}
.brand {
  height: 50px;
  border-bottom: 1px solid #4b545c;
  display: flex;
  align-items: center;
  padding-left: 20px;
}
.logo { width: 27px; height: 27px; margin-top: -3px; filter: drop-shadow(0 3px 4px rgba(0,0,0,.5)); }
.brand-text { margin-left: 9px; font-size: 16.25px; font-weight: 300; color: rgba(255,255,255,.8); margin-top: -2px; }
.upgrade { width: 18px; height: 18px; margin-left: 5px; margin-top: -2px; }
.user {
  margin: 0 7px;
  height: 60px;
  border-bottom: 1px solid #4f5962;
  display: flex;
  align-items: center;
  padding-left: 12px;
  padding-bottom: 2px;
  box-sizing: border-box;
}
.avatar {
  width: 30px;
  height: 30px;
  border-radius: 50%;
  background: #ff6a00;
  color: #fff;
  font-size: 20px;
  line-height: 30px;
  text-align: center;
}
.user-name { margin-left: 9px; margin-top: -2px; }

.nav { padding: 14px 7px 0; }
.link {
  height: 36px;
  margin-bottom: 2.86px;
  display: flex;
  align-items: center;
  border-radius: 4px;
  padding: 0 13px 0 14px;
  white-space: nowrap;
}
.ico-box { width: 26.4px; display: flex; justify-content: center; flex: none; margin-right: 3.6px; margin-top: -2px; }
.label { flex: 1; margin-top: -1px; }
.link.sub { margin-left: 15px; padding-left: 13px; }
.link.sub .ico-box { margin-right: 4px; }
.link.open { background: rgba(255,255,255,.1); color: #fff; }
.link.active { background: #ecedec; color: #343a40; }
.chev { flex: none; margin-top: -2px; }
.chev-down { flex: none; margin-right: 1px; margin-top: -2px; }
.badge {
  background: #17a2b8;
  color: #fff;
  font-size: 10px;
  font-weight: 700;
  line-height: 16px;
  height: 16px;
  min-width: 14px;
  text-align: center;
  box-sizing: border-box;
  padding: 0 3.5px;
  border-radius: 3px;
  margin-right: 2px;
}

.main { flex: 1; min-width: 0; display: flex; flex-direction: column; }
.topbar {
  height: 51px;
  box-sizing: border-box;
  background: #fff;
  border-bottom: 1px solid #dee2e6;
  display: flex;
  align-items: center;
  padding-left: 21px;
  color: rgba(0,0,0,.5);
  flex: none;
}
.burger { height: 14px; margin-right: 30px; margin-top: -2px; color: rgba(0,0,0,.6); }
.top-link { margin-right: 29px; margin-top: -3px; }
.top-right { margin-left: auto; display: flex; margin-right: 7px; margin-top: -2px; }
.top-ico { width: 43px; display: flex; justify-content: center; color: rgba(0,0,0,.55); }
.top-ico .ico { height: 14px; }

.content { flex: 1; position: relative; padding: 0 14px 0 14px; }
.head {
  display: flex;
  justify-content: space-between;
  align-items: flex-start;
  height: 66px;
}
h1 {
  margin: 0;
  padding-top: 10px;
  font-size: 23.4px;
  font-weight: 400;
  line-height: 36px;
  color: #343a40;
}
.crumb { padding-top: 16px; line-height: 20px; color: #6c757d; }
.crumb a { color: #007bff; }
.sep { margin: 0 7px; }

.row { display: flex; margin-bottom: 14.62px; }
.lbl { width: 480px; flex: none; font-weight: 700; line-height: 32px; height: 34px; color: #212529; }
.req { color: #dc3545; }
.ctl { width: 1106px; display: flex; }
.input {
  flex: 1;
  min-width: 0;
  height: 34px;
  box-sizing: border-box;
  border: 1px solid #ced4da;
  border-radius: 4px;
  background: #fff;
  padding: 0 11px 1px;
  font-family: inherit;
  font-size: 13px;
  color: #495057;
  outline: none;
}
.input::placeholder { color: #939ba2; opacity: 1; }
.select { padding: 0 11px 1px; }
.addon {
  width: 68px;
  flex: none;
  box-sizing: border-box;
  height: 34px;
  line-height: 31px;
  text-align: center;
  background: #e9ecef;
  border: 1px solid #ced4da;
  border-radius: 0 4px 4px 0;
  margin-left: -1px;
  color: #495057;
}
.ctl .input:not(:last-child) { border-radius: 4px 0 0 4px; }
.submit {
  width: 306px;
  height: 34px;
  background: #007bff;
  border: 1px solid #007bff;
  border-radius: 4px;
  color: #fff;
  font-family: inherit;
  font-size: 13px;
  font-weight: 400;
  padding-bottom: 2px;
}
.float-btn {
  position: absolute;
  right: 2px;
  top: 739px;
  width: 31px;
  height: 32px;
  border-radius: 16px 0 0 16px;
  background: linear-gradient(135deg, #f9b9d2, #f4a0c2);
  box-shadow: 0 5px 12px rgba(0,0,0,.08);
  color: #fff;
  font-size: 9px;
  line-height: 9px;
  padding: 7px 0 0 11px;
  box-sizing: border-box;
}
.float-btn span { display: block; }
.float-a { margin-left: 6px; }

.scrollbar {
  width: 17px;
  flex: none;
  background: #f1f1f1;
  display: flex;
  flex-direction: column;
  align-items: center;
}
.arrow { width: 0; height: 0; border-left: 4px solid transparent; border-right: 4px solid transparent; flex: none; }
.arrow.up { margin: 6px 0 7px; border-bottom: 4px solid #a3a3a3; }
.arrow.dn { margin: 6px 0 5px; border-top: 4px solid #505050; }
.thumb { width: 13px; height: 908px; background: #bdbdbd; flex: none; }
.track-fill { flex: 1; }
</style>

<style>
html, body { margin: 0; padding: 0; overflow: hidden; }
</style>
